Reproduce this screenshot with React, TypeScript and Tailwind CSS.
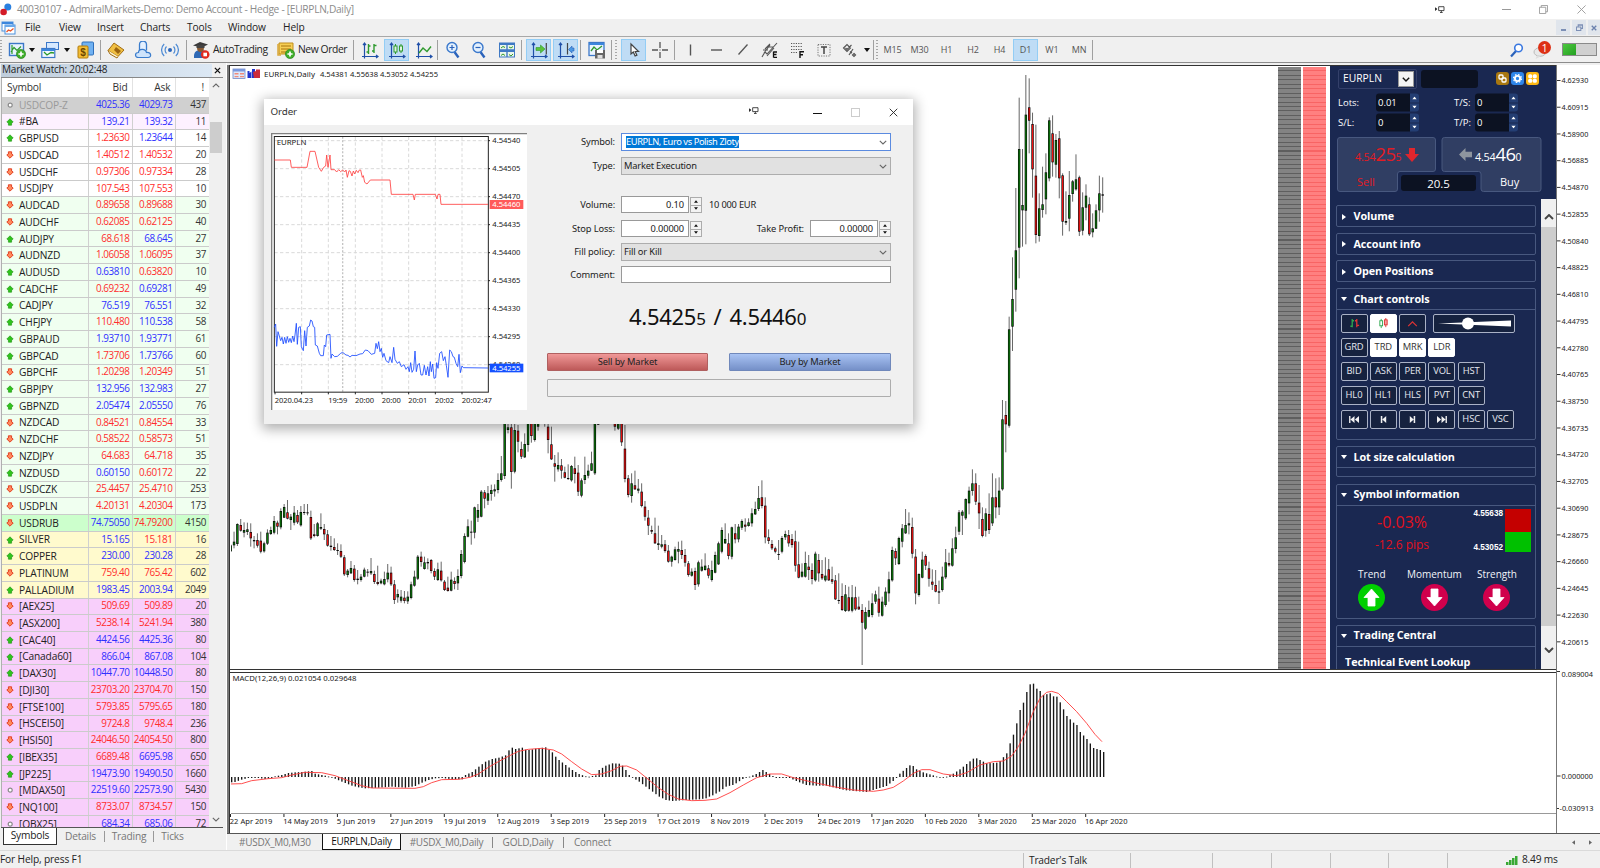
import React from "react";

/* ---------- data ---------- */

type Dir = "u" | "d" | "n";
type Row = [Dir, string, string, "r" | "b", string, "r" | "b", string, string];

const G = "bg-[#f0fff0]";
const P = "bg-[#f8cffb]";
const Y = "bg-[#fffacd]";
const W = "bg-white";

const rows: Row[] = [
  ["n", "USDCOP-Z", "4025.36", "b", "4029.73", "b", "437", "bg-[#d0d0d0]"],
  ["u", "#BA", "139.21", "b", "139.32", "b", "11", "bg-[#fdf1ff]"],
  ["u", "GBPUSD", "1.23630", "r", "1.23644", "b", "14", W],
  ["d", "USDCAD", "1.40512", "r", "1.40532", "r", "20", W],
  ["d", "USDCHF", "0.97306", "r", "0.97334", "r", "28", W],
  ["d", "USDJPY", "107.543", "r", "107.553", "r", "10", W],
  ["d", "AUDCAD", "0.89658", "r", "0.89688", "r", "30", G],
  ["d", "AUDCHF", "0.62085", "r", "0.62125", "r", "40", G],
  ["u", "AUDJPY", "68.618", "r", "68.645", "b", "27", G],
  ["d", "AUDNZD", "1.06058", "r", "1.06095", "r", "37", G],
  ["u", "AUDUSD", "0.63810", "b", "0.63820", "r", "10", G],
  ["u", "CADCHF", "0.69232", "r", "0.69281", "b", "49", G],
  ["u", "CADJPY", "76.519", "b", "76.551", "b", "32", G],
  ["u", "CHFJPY", "110.480", "r", "110.538", "b", "58", G],
  ["u", "GBPAUD", "1.93710", "b", "1.93771", "b", "61", G],
  ["u", "GBPCAD", "1.73706", "r", "1.73766", "b", "60", G],
  ["d", "GBPCHF", "1.20298", "r", "1.20349", "r", "51", G],
  ["u", "GBPJPY", "132.956", "b", "132.983", "b", "27", G],
  ["u", "GBPNZD", "2.05474", "b", "2.05550", "b", "76", G],
  ["d", "NZDCAD", "0.84521", "r", "0.84554", "r", "33", G],
  ["d", "NZDCHF", "0.58522", "r", "0.58573", "r", "51", G],
  ["d", "NZDJPY", "64.683", "r", "64.718", "r", "35", G],
  ["u", "NZDUSD", "0.60150", "b", "0.60172", "r", "22", G],
  ["d", "USDCZK", "25.4457", "r", "25.4710", "r", "253", G],
  ["d", "USDPLN", "4.20131", "r", "4.20304", "r", "173", G],
  ["d", "USDRUB", "74.75050", "b", "74.79200", "r", "4150", "bg-[#ccffcc]"],
  ["u", "SILVER", "15.165", "b", "15.181", "r", "16", Y],
  ["u", "COPPER", "230.00", "b", "230.28", "b", "28", Y],
  ["d", "PLATINUM", "759.40", "r", "765.42", "r", "602", Y],
  ["u", "PALLADIUM", "1983.45", "b", "2003.94", "b", "2049", Y],
  ["d", "[AEX25]", "509.69", "r", "509.89", "r", "20", P],
  ["d", "[ASX200]", "5238.14", "r", "5241.94", "r", "380", P],
  ["u", "[CAC40]", "4424.56", "b", "4425.36", "b", "80", P],
  ["u", "[Canada60]", "866.04", "b", "867.08", "b", "104", P],
  ["u", "[DAX30]", "10447.70", "b", "10448.50", "b", "80", P],
  ["d", "[DJI30]", "23703.20", "r", "23704.70", "r", "150", P],
  ["d", "[FTSE100]", "5793.85", "r", "5795.65", "r", "180", P],
  ["d", "[HSCEI50]", "9724.8", "r", "9748.4", "r", "236", P],
  ["d", "[HSI50]", "24046.50", "r", "24054.50", "r", "800", P],
  ["u", "[IBEX35]", "6689.48", "r", "6695.98", "b", "650", P],
  ["u", "[JP225]", "19473.90", "b", "19490.50", "b", "1660", P],
  ["n", "[MDAX50]", "22519.60", "b", "22573.90", "b", "5430", P],
  ["d", "[NQ100]", "8733.07", "r", "8734.57", "r", "150", P],
  ["n", "[OBX25]", "684.34", "b", "685.06", "b", "72", P],
];

/* high, body top, body bottom, low, direction; thirds of a pixel below y=400 */
const lower = `432,436,454,456,g 395,425,436,445,g 370,372,432,438,g 357,375,392,395,r 367,390,398,412,g 368,388,396,405,g 370,396,415,440,r 408,420,424,445,g
400,420,437,443,r 395,422,455,460,r 425,430,454,458,g 388,398,431,435,g 380,390,402,405,g 348,363,398,403,g 362,368,380,403,r 325,333,382,388,g
312,321,353,354,g 300,337,356,358,r 342,350,360,390,g 318,338,368,376,g 330,345,367,372,r 318,336,376,380,g 312,336,338,345,r 312,337,340,346,r
332,351,415,420,r 372,403,408,412,r 366,370,408,410,g 340,381,386,390,g 372,387,403,420,r 390,403,437,440,r 408,437,441,452,r 415,441,450,453,r
430,450,453,465,g 433,453,470,474,r 465,472,523,528,r 507,512,525,532,g 483,504,520,522,g 495,506,540,545,r 510,536,540,553,g 522,530,540,545,g
503,509,530,532,g 507,515,518,530,g 474,513,520,525,g 512,522,546,552,r 497,546,552,556,r 536,542,550,553,g 515,537,553,556,g 492,518,538,547,g
500,518,553,558,r 540,553,600,612,r 568,582,592,608,g 570,590,602,608,g 573,593,603,610,r 574,590,604,612,g 545,553,594,598,g 512,530,557,560,g
465,470,536,540,g 455,470,486,500,r 470,487,507,509,g 475,486,490,508,r 477,480,513,520,r 505,513,530,540,r 488,508,540,543,g 485,512,541,545,r
540,545,570,573,r 530,563,573,575,r 515,539,572,574,g 532,543,552,568,r 508,528,550,570,g 450,462,528,535,g 400,408,486,490,g 358,379,410,412,g
362,395,398,434,r 320,322,398,415,g 312,330,353,366,g 270,275,350,352,g 270,277,296,325,r 258,280,302,315,g 254,270,282,302,g 253,268,274,290,g
220,240,270,280,g 168,220,240,245,g -20,0,228,237,g 60,82,90,100,g 40,82,216,266,r 60,90,215,220,g 75,92,125,157,r 125,147,170,177,r
100,132,172,174,g 40,60,135,155,g 40,60,108,128,r 30,50,120,125,g 30,60,80,92,g 30,50,60,66,g 40,50,60,80,g 60,80,120,160,r
80,133,178,180,r 165,190,200,245,r 157,195,208,215,g 177,196,212,236,r 200,217,233,235,r 193,234,236,240,g 195,198,241,245,g 170,205,222,250,r
195,218,275,288,r 235,241,287,292,g 170,225,240,252,g 194,212,227,235,g 155,190,212,213,g 0,10,220,225,g 40,60,74,75,g 0,10,30,40,g
0,10,30,40,g 0,10,30,40,r 0,10,30,40,g 50,60,80,92,r 60,70,86,90,g 50,60,127,138,r 75,146,237,247,r 225,235,285,292,r
220,250,288,308,g 212,256,268,270,r 237,266,272,280,g 250,275,318,322,r 303,320,350,362,r 330,353,377,405,r 377,390,395,402,r 353,400,430,432,r
377,430,435,450,g 405,433,440,445,g 420,433,453,458,r 435,452,485,488,r 467,470,485,500,g 440,448,480,482,g 425,447,455,490,g 422,450,465,477,r
447,465,488,500,r 483,490,525,530,r 505,515,527,530,g 503,513,555,570,r 482,487,553,560,g 478,500,512,515,g 460,497,510,512,g 495,505,527,535,r
482,510,540,545,g 455,465,518,520,g 425,430,493,495,g 382,390,455,460,g 370,417,430,432,g 400,430,468,478,r 380,382,470,478,g 372,400,418,430,r
372,380,418,427,g 358,363,383,390,g 355,374,380,395,r 355,367,378,380,g 325,340,370,380,g 305,327,343,345,g 258,294,327,333,g 241,292,318,325,r
292,317,412,430,r 388,412,423,432,r 420,432,445,450,r 440,445,455,460,r 420,462,464,480,g 408,414,455,460,g 392,402,412,420,g 390,405,430,440,r
402,417,435,443,r 392,424,497,515,r 425,493,533,535,r 490,515,530,533,g 455,489,530,533,g 465,500,510,540,r 490,510,537,553,r 455,461,541,545,g
462,480,520,545,r 480,522,535,540,r 472,527,541,545,g 477,508,541,543,r 500,538,545,552,r 525,541,598,600,r 520,600,603,612,g 550,588,630,633,r
555,583,633,636,g 560,592,632,635,r 555,592,632,637,g 560,592,628,632,r 590,620,628,630,r 612,630,668,795,r 622,636,686,690,g 602,630,650,652,g
580,610,645,652,g 572,583,605,612,g 560,596,638,650,r 590,605,647,650,g 562,575,615,620,g 515,538,580,605,g 440,450,541,545,g 445,453,475,495,r
410,414,492,495,g 372,385,425,442,g 327,375,400,402,g 337,370,376,403,g 353,381,461,475,r 447,470,580,613,r 520,522,585,590,g 455,479,533,535,g
463,468,497,510,r 485,505,536,560,r 508,545,554,570,r 510,555,575,577,r 542,574,578,612,g 500,530,570,575,g 447,487,532,537,g 458,489,496,500,r
415,445,497,500,g 380,412,447,460,g 330,337,395,405,g 330,335,347,405,g 295,297,355,360,g 260,272,310,343,g 208,250,273,287,g 220,250,305,315,r
255,308,340,387,r 322,357,408,412,r 325,340,392,410,g 280,342,390,402,r 220,292,370,378,g 235,292,322,355,r 232,272,322,345,g 0,58,268,272,g
3,45,73,157,r`;

/* the rally, in thirds of a pixel below y=60 */
const upper = `770,808,1097,1103,g 592,717,800,873,g 384,571,689,755,g 113,267,563,655,g 267,435,451,560,g 45,164,452,553,g 55,142,182,280,r 158,192,328,413,r
194,347,525,550,r 400,445,528,545,g 320,433,450,473,g 280,337,418,463,g 172,181,355,364,g 166,220,307,350,r 222,240,314,353,g 213,235,355,415,r
340,346,485,527,r 394,483,488,495,g 333,405,476,514,g 360,364,402,425,g 283,358,388,392,g 347,352,515,528,r 397,442,512,526,g 373,407,443,481,g
412,433,523,528,r 460,505,517,532,g 433,451,506,507,g 347,400,451,485,g 352,403,407,458,r`;

type Candle = { h: number; t: number; b: number; l: number; up: boolean };
const parse = (s: string, base: number): Candle[] =>
  s.trim().split(/\s+/).map((c) => {
    const p = c.split(",");
    const y = (k: number) => base + Number(p[k]) / 3;
    return { h: y(0), t: y(1), b: y(2), l: y(3), up: p[4] === "g" };
  });
const candles = [...parse(lower, 400), ...parse(upper, 60)];
const bx = (i: number) => 230.7 + i * 3.341;

const macdKeys: [number, number][] = [
  [0, 1147], [1, 1146], [3, 1139], [5, 1134], [8, 1134], [10, 1137], [12, 1134], [13, 1129], [15, 1125], [17, 1119], [19, 1117], [21, 1116], [24, 1113], [25, 1121],
  [28, 1127], [30, 1132], [33, 1145], [36, 1157], [38, 1162], [40, 1165], [44, 1163], [48, 1160], [52, 1163], [54, 1160], [55, 1158], [57, 1148], [59, 1140], [61, 1135],
  [63, 1134], [66, 1138], [69, 1138], [70, 1125], [72, 1116], [74, 1100], [76, 1085], [78, 1077], [80, 1073], [82, 1066], [83, 1051], [84, 1043], [85, 1047], [87, 1043],
  [88, 1049], [89, 1050], [91, 1046], [94, 1042], [95, 1050], [96, 1057], [97, 1070], [98, 1080], [100, 1095], [102, 1110], [104, 1122], [106, 1129], [107, 1130],
  [109, 1126], [110, 1110], [112, 1097], [114, 1090], [116, 1091], [117, 1097], [118, 1110], [119, 1125], [120, 1133], [122, 1145], [124, 1160], [126, 1175], [128, 1190],
  [130, 1200], [132, 1203], [136, 1200], [140, 1198], [142, 1195], [143, 1190], [144, 1186], [146, 1175], [148, 1160], [150, 1155], [151, 1150], [153, 1137], [155, 1130],
  [157, 1122], [159, 1110], [160, 1116], [162, 1128], [163, 1134], [167, 1134], [169, 1143], [172, 1155], [175, 1157], [178, 1157], [182, 1167], [184, 1171], [190, 1176],
  [193, 1167], [196, 1158], [198, 1143], [199, 1134], [200, 1121], [202, 1104], [203, 1096], [204, 1098], [205, 1108], [207, 1117], [210, 1126], [212, 1133], [214, 1130],
  [216, 1121], [218, 1108], [220, 1092], [222, 1076], [223, 1075], [224, 1080], [226, 1090], [229, 1088], [230, 1083], [232, 1060], [233, 1030], [234, 1004], [235, 970],
  [236, 930], [237, 908], [238, 876], [239, 853], [240, 851], [241, 866], [242, 873], [243, 885], [245, 880], [246, 889], [247, 890], [248, 907], [249, 928], [250, 948],
  [252, 968], [253, 975], [254, 996], [256, 1017], [258, 1044], [260, 1050], [261, 1056],
];
const macd: number[] = [];
for (let k = 0; k < macdKeys.length - 1; k++) {
  const [i0, y0] = macdKeys[k];
  const [i1, y1] = macdKeys[k + 1];
  for (let i = i0; i < i1; i++) macd.push(400 + (y0 + ((y1 - y0) * (i - i0)) / (i1 - i0)) / 3);
}

const signal =
  "16,1152 50,1151 80,1142 130,1136 170,1133 200,1125 240,1117 290,1118 330,1127 370,1142 410,1157 440,1164 570,1165 595,1160 620,1148 650,1139 700,1138 735,1132 760,1122 790,1102 820,1085 850,1069 880,1054 910,1048 950,1045 985,1050 1010,1062 1040,1085 1070,1107 1100,1124 1130,1122 1160,1112 1185,1099 1205,1098 1235,1110 1260,1130 1300,1163 1330,1183 1360,1197 1400,1202 1440,1201 1475,1197 1515,1178 1555,1155 1595,1133 1635,1122 1670,1122 1705,1133 1765,1147 1825,1160 1885,1170 1945,1174 1975,1170 2005,1162 2035,1143 2065,1120 2090,1109 2115,1109 2155,1122 2195,1127 2225,1118 2265,1095 2305,1085 2335,1083 2360,1068 2380,1040 2400,1000 2425,935 2445,895 2465,877 2480,874 2500,880 2525,905 2555,935 2585,970 2610,1003 2631,1025";

const dates = ["22 Apr 2019", "14 May 2019", "5 Jun 2019", "27 Jun 2019", "19 Jul 2019", "12 Aug 2019", "3 Sep 2019", "25 Sep 2019", "17 Oct 2019", "8 Nov 2019", "2 Dec 2019", "24 Dec 2019", "17 Jan 2020", "10 Feb 2020", "3 Mar 2020", "25 Mar 2020", "16 Apr 2020"];
const axis = Array.from({ length: 22 }, (_, i) => (4.6293 - i * 0.02015).toFixed(5));

/* ---------- small pieces ---------- */

const Mark = ({ d }: { d: Dir }) => (
  <svg viewBox="0 0 8 8" className="h-[8px] w-[8px]">
    {d === "n" && <circle cx="4.2" cy="4.2" r="2" fill="#fff" stroke="#8a8a8a" strokeWidth="1.2" />}
    {d === "u" && <path d="M4 .8 7.2 4 5.6 5V7.2H2.4V5L.8 4Z" fill="#2fc41c" stroke="#1d8f10" strokeWidth=".6" />}
    {d === "d" && <path d="M4 7.2 7.2 4 5.6 3V.8H2.4V3L.8 4Z" fill="#ff8a5c" stroke="#e0371a" strokeWidth=".9" />}
  </svg>
);

const Sep = () => <div className="h-[20px] w-px shrink-0 bg-[#a0a0a0]" />;
const Grip = () => <div className="h-[20px] w-[2px] shrink-0 bg-[repeating-linear-gradient(#a8a8a8_0_1px,#f0f0f0_1px_3px)]" />;
const Caret = () => (
  <svg viewBox="0 0 6 4" className="h-[4px] w-[6px] shrink-0"><path d="M0 0h6L3 4Z" fill="#111" /></svg>
);

const Ico = ({ className = "w-[26px]", children }: { className?: string; children: React.ReactNode }) => (
  <div className={"flex h-[22px] shrink-0 items-center justify-center " + className}>
    <svg viewBox="0 0 18 18" className="h-[18px] w-[18px]" fill="none">{children}</svg>
  </div>
);
const hl = "bg-[#bfdcf5] outline outline-1 -outline-offset-1 outline-[#93cdf5]";
const Plus = () => (
  <g><circle cx="13" cy="13" r="4.6" fill="#3fae2a" stroke="#23801a" strokeWidth=".6" /><path d="M13 10.4v5.2M10.4 13h5.2" stroke="#fff" strokeWidth="1.7" /></g>
);
const Axes = () => <path d="M3.5 2v13.5H17M2 4.2 3.5 2 5 4.2M15 14l2 1.5-2 1.5M1 15.5h2.5v2" stroke="#1f4fa8" strokeWidth="1.2" />;

const DockIcon = ({ className }: { className?: string }) => (
  <svg viewBox="0 0 11 9" className={"h-[8px] w-[10px] " + (className ?? "")} fill="none">
    <path d="M0 1.5v4l2.5-2Z" fill="#111" /><path d="M4 .8h6v4.4H4ZM7 5.2V7M5.5 7.3h3" stroke="#333" strokeWidth="1" />
  </svg>
);

const Chev = ({ className }: { className?: string }) => (
  <svg viewBox="0 0 8 5" className={"h-[5px] w-[8px] " + (className ?? "")} fill="none"><path d="M.8.8 4 4 7.2.8" stroke="#666" strokeWidth="1.1" /></svg>
);

/* ---------- toolbar ---------- */

const Toolbar = () => (
  <div className="flex h-[26px] shrink-0 items-center border-b border-[#8c8c8c] bg-[#f0f0f0] text-[10.3px] tracking-[-0.4px] text-[#222]">
    <Grip />
    <Ico className="ml-[2px] w-[25px]"><rect x="1.5" y="2.5" width="14" height="12" fill="#e8f3ff" stroke="#3c78c8" strokeWidth="1.4" /><path d="M3 11 6 6.5l3 3 4-4M4 4v9" stroke="#2b9a2b" strokeWidth="1.2" /><Plus /></Ico>
    <Caret />
    <Ico className="ml-[1px] w-[28px]"><rect x="5.5" y="1.5" width="12" height="7" fill="#d6e9ff" stroke="#3c78c8" /><rect x=".8" y="7.5" width="13" height="9" fill="#f2f8ff" stroke="#3c78c8" strokeWidth="1.2" /><path d="M1 8h13v2H1z" fill="#3c86dd" /><path d="m3 11 3 3 4-2.5L13 12" stroke="#2b9a2b" strokeWidth="1.3" /></Ico>
    <Caret />
    <Ico className="ml-px w-[29px]"><rect x="5" y="1" width="11.5" height="13" rx="1" fill="#6fb1f2" stroke="#2f70bb" /><rect x="1" y="5" width="10" height="12" rx="1" fill="#f3bd35" stroke="#b27c0f" /><text x="3.2" y="15" fontSize="10" fontWeight="bold" fill="#6b4600" fontFamily="Liberation Sans, sans-serif">$</text></Ico>
    <Sep />
    <Ico className="ml-px w-[28px]"><path d="M1 9.5 7 2l10 7-6 6.5Z" fill="#f0bf42" stroke="#a26d14" /><path d="M1 9.5 3 13l7 4 1-1.5" fill="#fff4cf" stroke="#a26d14" /><path d="m9 6 5 4-3 3-4-4z" fill="#9c6510" /></Ico>
    <Ico className="w-[25px]"><path d="M5.500 9.500V3.500a3.500 3.500 0 0 1 7 0v6" fill="#e5f1ff" stroke="#3a7ccc" strokeWidth="1.300" /><path d="M4.500 16.500c-4 0-4-5 0-5 0-4 7-4.500 8 0 5-.5 5.500 5 1.500 5Z" fill="#cfe4fb" stroke="#3a7ccc" strokeWidth="1.200" /></Ico>
    <Ico className="w-[29px]"><circle cx="9" cy="9" r="2" fill="#2b66bb" /><path d="M5.500 12.500a5 5 0 0 1 0-7M12.500 5.500a5 5 0 0 1 0 7M3.200 15a8.200 8.200 0 0 1 0-12M14.800 3a8.200 8.200 0 0 1 0 12" stroke="#4c8ad4" strokeWidth="1.2" /></Ico>
    <div className="ml-[2px]"><Sep /></div>
    <Ico className="ml-[2px] w-[24px]"><path d="M2 15c0-4 2.500-6 7-6s6 2 6 6v2H2Z" fill="#2f69b5" /><circle cx="8.500" cy="7.500" r="3.400" fill="#8a5b33" /><path d="m1 4.500 7-3.500 8 2.500-6 3Z" fill="#3a3a3a" /><path d="M4.500 4h8v3h-8z" fill="#444" /><circle cx="13.200" cy="13.500" r="4.300" fill="#e22a1d" /><rect x="11.400" y="11.700" width="3.600" height="3.600" fill="#fff" /></Ico>
    <div className="w-[61px] shrink-0">AutoTrading</div>
    <Ico className="w-[24px]"><path d="M2 2h14v11H2z" fill="#f6cf55" stroke="#c08d1b" /><path d="M4 5h10M4 8h10M4 11h6" stroke="#a8740e" /><path d="M1 3v11h3" stroke="#d9a637" strokeWidth="1.500" /><Plus /></Ico>
    <div className="w-[55px] shrink-0 whitespace-nowrap">New Order</div>
    <Sep />
    <Ico className="ml-[2px] w-[28px]"><Axes /><path d="M7.500 3v10M5.500 11h2M7.500 5h2M13 3v9M11 10h2M13 4.500h2.500" stroke="#2f9a2f" strokeWidth="1.400" /></Ico>
    <Ico className={"w-[25px] " + hl}><Axes /><path d="M7.500 3v10M13 3v9" stroke="#2f9a2f" /><rect x="6" y="5" width="3" height="6" fill="#dff5df" stroke="#2f9a2f" /><rect x="11.500" y="5" width="3" height="5" fill="#dff5df" stroke="#2f9a2f" /></Ico>
    <Ico className="ml-[1px] w-[27px]"><Axes /><path d="m4 12 4-5 4 3.500 4-5" stroke="#2f9a2f" strokeWidth="1.400" /></Ico>
    <Sep />
    <Ico className="ml-[2px] w-[26px]"><path d="m10.500 11 4 5.500" stroke="#2a62ba" strokeWidth="2.400" /><circle cx="8" cy="6.500" r="5" fill="#e3f0fd" stroke="#3a78cc" strokeWidth="1.400" /><path d="M5.500 6.500h5M8 4v5" stroke="#2a62ba" strokeWidth="1.200" /></Ico>
    <Ico className="w-[26px]"><path d="m10.500 11 4 5.500" stroke="#2a62ba" strokeWidth="2.400" /><circle cx="8" cy="6.500" r="5" fill="#e3f0fd" stroke="#3a78cc" strokeWidth="1.400" /><path d="M5.500 6.500h5" stroke="#2a62ba" strokeWidth="1.200" /></Ico>
    <Ico className="w-[29px]"><rect x="1" y="1.500" width="16" height="15" fill="#3f79c4" /><path d="M2 4h6.300v4.300H2zM9.700 4H16v4.300H9.700zM2 11h6.300v4.600H2zM9.700 11H16v4.600H9.700z" fill="#eaf6ea" /><path d="m3 7 2-1.500 2 1M11 6l2 1 2-1.500M3 14.500 5 13l2 1.500M11 13.500l2 1.500 2-2" stroke="#2f9a2f" /></Ico>
    <Sep />
    <Ico className={"ml-[4px] w-[25px] " + hl}><Axes /><path d="M16.300 2v11.500" stroke="#444" strokeWidth="1.200" /><path d="M6 6.500h4.500V4l4.500 4-4.500 4V9.500H6Z" fill="#5cc43a" stroke="#2f9a2f" strokeWidth=".6" /></Ico>
    <Ico className={"ml-[2px] w-[25px] " + hl}><Axes /><path d="M10.500 2v11.500" stroke="#444" strokeWidth="1.200" /><path d="M17 7h-2V5l-3.500 3.500L15 12v-2h2Z" fill="#4b97e2" stroke="#2a62ba" strokeWidth=".6" /></Ico>
    <div className="ml-[2px]"><Sep /></div>
    <Ico className="ml-[2px] w-[28px]"><rect x="1" y="1.500" width="15" height="13" fill="#eaf4ff" stroke="#3c78c8" strokeWidth="1.300" /><path d="M1 2h15v2H1z" fill="#3c86dd" /><path d="m3 10 3-4 3 3 5-4" stroke="#2f9a2f" strokeWidth="1.300" /><rect x="7" y="9" width="10" height="8.500" fill="#666" /><path d="M9 9h6v3H9z" fill="#fff" /><path d="M9.500 14h5v3.500h-5z" fill="#ddd" /></Ico>
    <Sep />
    <div className="ml-[3px]"><Grip /></div>
    <Ico className={"ml-[4px] w-[25px] " + hl}><path d="M6 3v10l2.300-2 1.800 4 1.800-.8-1.700-3.700h3.300Z" fill="#fff" stroke="#444" strokeWidth="1.200" /></Ico>
    <Ico className="w-[27px]"><path d="M9 1v6M9 11v6M1 9h6M11 9h6" stroke="#555" strokeWidth="1.300" /><path d="M8.500 8.500h1v1h-1z" fill="#555" /></Ico>
    <div className="ml-px"><Sep /></div>
    <Ico className="ml-[2px] w-[26px]"><path d="M9.500 3.500v11" stroke="#555" strokeWidth="1.400" /></Ico>
    <Ico className="w-[26px]"><path d="M4 9h11" stroke="#555" strokeWidth="1.400" /></Ico>
    <Ico className="w-[27px]"><path d="m4.500 13.500 9-10" stroke="#555" strokeWidth="1.300" /></Ico>
    <Ico className="w-[27px]"><path d="m1 16 3-5 2 2 10-11M4 8l5-5M3 12l6-8M6 15l7-8M2 9h5M7 6h5" stroke="#555" strokeWidth="1.100" /><path d="M12.500 10.500v6M12.500 11H16M12.500 13.500h3M12.500 16.300H16" stroke="#111" strokeWidth="1.300" /></Ico>
    <Ico className="w-[27px]"><path d="M3 2.500h11M3 5.500h11M3 8.500h11M3 11.500h7" stroke="#555" strokeWidth="1.200" strokeDasharray="1.200 1.200" /><path d="M12 17v-6.200h4M12 13.800h3" stroke="#111" strokeWidth="1.400" /></Ico>
    <Ico className="w-[27px]"><rect x="3" y="3.500" width="12" height="11.500" stroke="#777" strokeDasharray="1.200 1.200" /><path d="M6 6h6M9 6v7" stroke="#444" strokeWidth="1.500" /></Ico>
    <Ico className="w-[25px]"><path d="m2.500 7 3.500-3.500L9.500 7 6 10.500ZM4.500 7 6 8.500 10.500 4" stroke="#555" strokeWidth="1.100" /><path d="m8 14 4-6M9 10.500l2 1.500M13 12.500l1.500 1.500-1.500 1.500-1.500-1.500z" stroke="#555" strokeWidth="1.200" /></Ico>
    <div className="ml-[2px]"><Caret /></div>
    <div className="ml-[3px]"><Sep /></div>
    <div className="ml-[2px]"><Grip /></div>
    <div className="ml-px flex items-center text-center text-[9px] tracking-[-0.1px] text-[#555]">
      <div className="w-[27px]">M15</div><div className="w-[27px]">M30</div><div className="w-[27px]">H1</div><div className="w-[26px]">H2</div><div className="w-[27px]">H4</div>
      <div className={"h-[22px] w-[25px] leading-[22px] " + hl}>D1</div><div className="w-[28px]">W1</div><div className="w-[26px]">MN</div>
    </div>
    <Sep />
    <div className="ml-auto flex items-center pr-[3px]">
      <Ico className="w-[24px]"><path d="m8 10-5 5.500" stroke="#2a62ba" strokeWidth="2.200" /><circle cx="10.500" cy="7" r="3.800" fill="#fff" stroke="#3a78e0" strokeWidth="1.600" /></Ico>
      <div className="relative ml-[3px] h-[20px] w-[22px]">
        <svg viewBox="0 0 22 20" className="h-[20px] w-[22px]" fill="none"><ellipse cx="8" cy="12" rx="6" ry="4.300" fill="#e8e8e8" stroke="#bbb" /><path d="m5 15.500-1.500 3.500 5-2.500" fill="#ddd" /></svg>
        <span className="absolute left-[6px] top-px h-[13px] w-[13px] rounded-full bg-[#dd3015] text-center text-[11px] leading-[13px] text-white">1</span>
      </div>
      <div className="ml-[8px] flex h-[13px] w-[35px] border border-[#8a8a8a] bg-[#d0d0d0]"><div className="w-[13px] bg-gradient-to-br from-[#4cc83e] to-[#22a022]" /></div>
    </div>
  </div>
);

/* ---------- market watch ---------- */

const cell = "flex h-full items-center justify-end border-r border-[#d0d0d0] pr-[2px] text-[9.900px] tracking-[-0.420px]";
const MarketWatch = () => (
  <div className="flex w-[226px] shrink-0 flex-col bg-[#f0f0f0]">
    <div className="ml-px mt-px flex h-[13px] w-[222px] shrink-0 items-center justify-between bg-[#f0f0f0]">
      <div className="h-full flex-1 bg-gradient-to-r from-[#bfcddb] to-[#dce8f4] pl-px text-[10px] leading-[11px] tracking-[-0.2px] text-[#222]">Market Watch: 20:02:48</div>
      <svg viewBox="0 0 8 8" className="mx-[2px] h-[7px] w-[7px]"><path d="m1 1 6 6M7 1 1 7" stroke="#111" strokeWidth="1.500" /></svg>
    </div>
    <div className="ml-px flex h-[751px] w-[222px] shrink-0 overflow-hidden border-y border-b-[#555] border-t-[#888] bg-white">
      <div className="w-[208px] shrink-0 border-l border-[#b0b0b0] text-[10.200px] tracking-[-0.15px]">
        <div className="grid h-[19px] grid-cols-[87px_43.500px_43px_33.500px] text-[#333]">
          <div className="flex items-center border-r border-[#e2e2e2] pl-[5px]">Symbol</div>
          <div className="flex items-center justify-end border-r border-[#e2e2e2] pr-[4px]">Bid</div>
          <div className="flex items-center justify-end border-r border-[#e2e2e2] pr-[4px]">Ask</div>
          <div className="flex items-center justify-end pr-[5px]">!</div>
        </div>
        {rows.map(([d, s, b, bc, a, ac, sp, bg]) => (
          <div key={s} className={"grid h-[16.720px] grid-cols-[87px_43.500px_43px_33.500px] border-b border-[#cbcbcb] leading-none " + bg}>
            <div className={"flex h-full items-center border-r border-[#d0d0d0] pl-[4px] " + (s === "USDCOP-Z" ? "text-[#9a9a9a]" : "text-[#222]")}>
              <Mark d={d} /><span className="ml-[5px]">{s}</span>
            </div>
            <div className={cell + (bc === "r" ? " text-[#ff2d2d]" : " text-[#3030ff]")}>{b}</div>
            <div className={cell + (ac === "r" ? " text-[#ff2d2d]" : " text-[#3030ff]")}>{a}</div>
            <div className="flex h-full items-center justify-end pr-[3px] text-[9.900px] tracking-[-0.420px] text-[#333]">{sp}</div>
          </div>
        ))}
      </div>
      <div className="flex flex-1 flex-col items-center justify-between bg-[#f0f0f0] py-[5px]">
        <div className="flex w-full flex-col items-center"><Chev className="rotate-180" /><div className="mr-px mt-[34px] h-[31px] w-[12px] bg-[#cdcdcd]" /></div>
        <Chev />
      </div>
    </div>
    <div className="ml-[3px] flex h-[20px] items-start text-[10.200px] tracking-[-0.2px] text-[#777]">
      <div className="h-[17px] w-[54px] border border-t-0 border-[#333] bg-white text-center leading-[15px] text-[#222]">Symbols</div>
      <div className="w-[47px] text-center leading-[16px]">Details</div>
      <div className="mt-[3px] h-[11px] w-px bg-[#999]" />
      <div className="w-[48px] text-center leading-[16px]">Trading</div>
      <div className="mt-[3px] h-[11px] w-px bg-[#999]" />
      <div className="w-[37px] text-center leading-[16px]">Ticks</div>
    </div>
  </div>
);

/* ---------- charts ---------- */

const chartText = { fontFamily: "Noto Sans, sans-serif", fontSize: 7.4, fill: "#222" };

const PriceChart = () => (
  <svg viewBox="231 66 1047 603" className="h-full w-[1047px] shrink-0">
    <rect x="233" y="69" width="12" height="9.500" fill="#dce8fb" stroke="#7088c8" strokeWidth=".8" />
    <path d="M233 69h12v2.500h-12z" fill="#7a97dd" /><path d="M234.500 73h4v1.500h-4zm0 3h4v1.300h-4zm5.500-3h4v1.500h-4zm0 3h4v1.300h-4z" fill="#f08a7a" />
    <path d="M247.500 71h2v2l2-1.500V78h-4zM252 69h3v9h-3z" fill="#2233cc" /><path d="M253 72l3-1v-1.500h4V78h-6z" fill="#cc2a3a" />
    <text x="264" y="76.700" textLength="51" lengthAdjust="spacingAndGlyphs" {...chartText}>EURPLN,Daily</text>
    <text x="320" y="76.700" textLength="118" lengthAdjust="spacingAndGlyphs" {...chartText}>4.54381 4.55638 4.53052 4.54255</text>
    {candles.map((c, i) => {
      const h = Math.max(c.b - c.t, 1);
      return (
        <g key={i}>
          <path d={`M${bx(i)} ${c.h}V${c.l}`} stroke="#333" strokeWidth=".75" />
          <rect x={bx(i) - 1.200} y={c.t} width="2.400" height={h} fill="#0a0a0a" />
          {h > 1.600 && <rect x={bx(i) - 0.600} y={c.t + 0.700} width="1.200" height={h - 1.400} fill={c.up ? "#0a7a0a" : "#f01010"} />}
        </g>
      );
    })}
  </svg>
);

const MacdChart = () => (
  <svg viewBox="231 673 1325 140" className="h-[140px] w-[1325px] shrink-0">
    <text x="232.500" y="681" textLength="124" lengthAdjust="spacingAndGlyphs" {...chartText}>MACD(12,26,9) 0.021054 0.029648</text>
    {[...macd, 752].map((y, i) => (
      <rect key={i} x={bx(i) + 0.300} y={Math.min(y, 777)} width="1.350" height={Math.max(Math.abs(y - 777), 0.800)} fill="#161616" />
    ))}
    <polyline points={signal} transform="translate(225 400) scale(.33333)" fill="none" stroke="#ff3b3b" strokeWidth="2.700" />
  </svg>
);

const DateAxis = () => (
  <svg viewBox="229 813 1327 17" className="-ml-[2px] h-[17px] w-[1327px] shrink-0">
    {dates.map((d, i) => (
      <g key={d}>
        <path d={`M${230.500 + i * 53.450} 812v4`} stroke="#222" />
        <text x={229.800 + i * 53.450} y="823" textLength={d.length > 10 ? (d.includes("M") ? 44.500 : 42.500) : 38.500} lengthAdjust="spacingAndGlyphs" {...chartText}>{d}</text>
      </g>
    ))}
  </svg>
);

const PriceAxis = () => (
  <svg viewBox="1557 66 43 765" className="h-[765px] w-[43px] shrink-0 bg-white">
    {axis.map((a, i) => (
      <g key={a}>
        <path d={`M1557 ${81.500 + i * 26.730}h3.500`} stroke="#333" />
        <text x="1561.500" y={84.200 + i * 26.730} textLength="26.800" lengthAdjust="spacingAndGlyphs" {...chartText}>{a}</text>
      </g>
    ))}
    <text x="1561.500" y="678.400" textLength="31.500" lengthAdjust="spacingAndGlyphs" {...chartText}>0.089004</text>
    <text x="1561.500" y="779.700" textLength="31.500" lengthAdjust="spacingAndGlyphs" {...chartText}>0.000000</text>
    <text x="1559.500" y="812" textLength="34" lengthAdjust="spacingAndGlyphs" {...chartText}>-0.030913</text>
    <path d="M1557 672.500h3M1557 777h3.500M1557 809.500h2" stroke="#333" />
  </svg>
);

/* ---------- trading panel ---------- */

const Spin = ({ v }: { v: string }) => (
  <div className="flex h-[18px] w-[43px]">
    <div className="flex w-[34px] items-center rounded-l-[3px] bg-[#0c1222] pl-[2px]">{v}</div>
    <div className="flex w-[9px] flex-col gap-px">
      <div className="flex flex-1 items-center justify-center rounded-tr-[3px] bg-[#243e73]"><svg viewBox="0 0 6 4" className="h-[3px] w-[5px]"><path d="M0 4h6L3 0Z" fill="#fff" /></svg></div>
      <div className="flex flex-1 items-center justify-center rounded-br-[3px] bg-[#243e73]"><svg viewBox="0 0 6 4" className="h-[3px] w-[5px]"><path d="M0 0h6L3 4Z" fill="#fff" /></svg></div>
    </div>
  </div>
);

const Head = ({ open, children }: { open?: boolean; children: string }) => (
  <div className={"flex h-[21px] shrink-0 items-center text-[10.800px] font-bold tracking-[-0.080px] text-white " + (open ? "border-b border-[#48587f]" : "")}>
    <svg viewBox="0 0 6 6" className="ml-[4px] h-[6px] w-[6px]">{open ? <path d="M0 1h6L3 5Z" fill="#fff" /> : <path d="M1 0v6l4-3Z" fill="#fff" />}</svg>
    <span className="ml-[6.500px]">{children}</span>
  </div>
);
const box = "flex shrink-0 flex-col rounded-[2px] border border-[#48587f]";

const Btn = ({ on, children }: { on?: boolean; children: React.ReactNode }) => (
  <div className={"flex h-[19px] w-[27px] shrink-0 items-center justify-center rounded-[2px] border text-[9.400px] font-medium tracking-[-0.1px] " + (on ? "border-white bg-white text-[#333]" : "border-[#aab2c6] bg-[#16223f] text-[#e6e9f2]")}>
    {children}
  </div>
);
const Nav = ({ d }: { d: string }) => <svg viewBox="0 0 12 10" className="h-[9px] w-[11px]"><path d={d} fill="#f2f2f2" /></svg>;

const Gauge = ({ label, up }: { label: string; up?: boolean }) => (
  <div className="flex w-[62.600px] flex-col items-center">
    <div className="whitespace-nowrap text-[10px] leading-[14px] text-[#f2f4f9]">{label}</div>
    <svg viewBox="0 0 27 27" className="mt-[3px] h-[27px] w-[27px]">
      <circle cx="13.500" cy="13.500" r="13.500" fill={up ? "#00d000" : "#d0004c"} />
      <path d="M13.500 5 21 13.500h-4V22h-7v-8.500H6Z" fill="#fff" stroke="#fff" strokeWidth=".8" strokeLinejoin="round" transform={up ? "" : "rotate(180 13.500 13.500)"} />
    </svg>
  </div>
);

const Panel = () => (
  <div className="mr-px flex h-full w-[226px] shrink-0 flex-col overflow-hidden bg-[#1a2851] font-['Open_Sans',sans-serif] text-[9.500px] text-white">
    <div className="ml-[8px] mt-[3px] flex h-[21px] shrink-0 items-start">
      <div className="flex h-[20px] w-[79px] items-center justify-between rounded-[2px] border border-[#34406a] pl-[4px] pr-[2px] text-[10.300px] font-medium">
        EURPLN
        <div className="flex h-[16px] w-[16px] items-center justify-center border border-[#999] bg-[#f4f4f4]"><svg viewBox="0 0 8 5" className="h-[5px] w-[8px]" fill="none"><path d="M.8.8 4 4 7.200.8" stroke="#111" strokeWidth="1.400" /></svg></div>
      </div>
      <div className="ml-[4px] mt-px h-[18px] w-[57px] rounded-[3px] bg-[#0c1222]" />
      <div className="ml-[18px] mt-[3px] flex gap-[2px]">
        <div className="h-[13px] w-[13px] rounded-[3px] bg-[#a87710]"><svg viewBox="0 0 13 13" fill="none"><rect x="3" y="3" width="4" height="4" rx="1" stroke="#fff" strokeWidth="1.300" /><rect x="6" y="6" width="4" height="4" rx="1" stroke="#fff" strokeWidth="1.300" /></svg></div>
        <div className="h-[13px] w-[13px] rounded-[3px] bg-[#2f86ea]"><svg viewBox="0 0 13 13" fill="none"><circle cx="6.500" cy="6.500" r="2.600" stroke="#fff" strokeWidth="1.900" /><circle cx="6.500" cy="6.500" r="4" stroke="#fff" strokeWidth="1.200" strokeDasharray="1.600 1.540" /></svg></div>
        <div className="h-[13px] w-[13px] rounded-[3px] bg-[#fdb813]"><svg viewBox="0 0 13 13" fill="#fff"><rect x="2.200" y="2.200" width="4" height="4" rx="1.500" /><rect x="6.800" y="2.200" width="4" height="4" rx="1.500" /><rect x="2.200" y="6.800" width="4" height="4" rx="1.500" /><rect x="6.800" y="6.800" width="4" height="4" rx="1.500" /></svg></div>
      </div>
    </div>
    {[["Lots:", "0.01", "T/S:", "0"], ["S/L:", "0", "T/P:", "0"]].map((r) => (
      <div key={r[0]} className="ml-[8px] mt-[4px] flex h-[16px] shrink-0 translate-y-[0.500px] items-center font-medium">
        <div className="w-[38px]">{r[0]}</div><Spin v={r[1]} /><div className="ml-[35px] w-[21px]">{r[2]}</div><Spin v={r[3]} />
      </div>
    ))}
    <div className="relative ml-[7px] mt-[7px] h-[55px] w-[205px] shrink-0">
      <svg viewBox="0 0 205 55" className="absolute inset-0 h-full w-full" fill="#303e63" stroke="#48587f">
        <path d="M3 .5h93a2.500 2.500 0 0 1 2.500 2.500v29a2.500 2.500 0 0 1-2.500 2.500H63a2.500 2.500 0 0 0-2.500 2.500v15a2.500 2.500 0 0 1-2.500 2.500H3A2.500 2.500 0 0 1 .5 52V3A2.500 2.500 0 0 1 3 .5Z" />
        <path d="M107.500.5h94a2.500 2.500 0 0 1 2.500 2.500v49a2.500 2.500 0 0 1-2.500 2.500h-55a2.500 2.500 0 0 1-2.500-2.500V37a2.500 2.500 0 0 0-2.500-2.500h-34A2.500 2.500 0 0 1 105 32V3a2.500 2.500 0 0 1 2.500-2.500Z" />
      </svg>
      <div className="relative -top-px flex h-[35px] items-center">
        <div className="flex w-[99px] items-baseline pl-[18px] text-[#e31b23]">
          <span className="text-[10.800px] tracking-[-0.2px]">4.54</span><span className="text-[18.500px] leading-[24px] tracking-[-0.6px]">25</span><span className="text-[10.500px]">5</span>
          <svg viewBox="0 0 14 14" className="ml-[3px] h-[14px] w-[14px] translate-y-px self-center"><path d="M4 0h6v6h4l-7 8-7-8h4Z" fill="#e0262d" /></svg>
        </div>
        <div className="ml-[6px] flex items-baseline pl-[17px]">
          <svg viewBox="0 0 14 14" className="mr-[3px] h-[13px] w-[13px] translate-y-px self-center"><path d="M14 4v6H7v4L0 7l7-7v4Z" fill="#8e959e" /></svg>
          <span className="text-[10.800px] font-medium tracking-[-0.2px]">4.54</span><span className="text-[18.500px] font-medium leading-[24px] tracking-[-0.6px]">46</span><span className="text-[10.500px] font-medium">0</span>
        </div>
      </div>
      <div className="relative flex h-[20px] text-[11px]">
        <div className="w-[64px] pl-[20px] leading-[20px] text-[#e31b23]">Sell</div>
        <div className="mt-[3px] h-[16px] w-[75px] rounded-[3px] bg-[#0c1222] text-center text-[11.500px] font-medium leading-[17px]">20.5</div>
        <div className="w-[66px] pl-[24px] font-medium leading-[20px]">Buy</div>
      </div>
    </div>
    <div className="flex flex-1 overflow-hidden">
      <div className="ml-[6px] mt-[13px] flex w-[200px] flex-col">
        <div className={box + " h-[22px]"}><Head>Volume</Head></div>
        <div className={box + " mt-[5.500px] h-[22px]"}><Head>Account info</Head></div>
        <div className={box + " mt-[5.500px] h-[22px]"}><Head>Open Positions</Head></div>
        <div className={box + " mt-[6px] h-[151.500px]"}>
          <Head open>Chart controls</Head>
          <div className="flex flex-col gap-[5px] pl-[3.500px] pt-[4px]">
            <div className="flex gap-[2.300px]">
              <Btn><svg viewBox="0 0 12 12" className="h-[11px] w-[11px]" fill="none"><path d="M3.500 1v9M1.500 9h2M3.500 3h2" stroke="#2fa84f" strokeWidth="1.400" /><path d="M8.500 1v9M6.500 3h2M8.500 8h2.500" stroke="#e03434" strokeWidth="1.400" /></svg></Btn>
              <Btn on><svg viewBox="0 0 12 12" className="h-[11px] w-[11px]" fill="none"><path d="M3.500 1v10" stroke="#2fa84f" /><rect x="2" y="3" width="3" height="5.500" fill="#fff" stroke="#2fa84f" /><path d="M8.500 0v10" stroke="#e03434" /><rect x="7" y="2" width="3" height="5.500" fill="#f6a0a0" stroke="#e03434" /></svg></Btn>
              <Btn><svg viewBox="0 0 12 7" className="h-[6px] w-[11px]" fill="none"><path d="m1 6 5-5 5 5" stroke="#e03434" strokeWidth="1.400" /></svg></Btn>
              <div className="ml-[4.500px] h-[19px] w-[82px] rounded-[2px] border border-[#aab2c6] bg-[#16223f]"><svg viewBox="0 0 80 17" className="h-full w-full"><path d="M4 8.500 77 5.500v6Z" fill="#fff" /><circle cx="34" cy="8.500" r="6" fill="#fff" /></svg></div>
            </div>
            <div className="flex gap-[2.300px]"><Btn>GRD</Btn><Btn on>TRD</Btn><Btn on>MRK</Btn><Btn on>LDR</Btn></div>
            <div className="flex gap-[2.300px]"><Btn>BID</Btn><Btn>ASK</Btn><Btn>PER</Btn><Btn>VOL</Btn><Btn>HST</Btn></div>
            <div className="flex gap-[2.300px]"><Btn>HL0</Btn><Btn>HL1</Btn><Btn>HLS</Btn><Btn>PVT</Btn><Btn>CNT</Btn></div>
            <div className="flex gap-[2.300px]">
              <Btn><Nav d="M0 1h1.500v8H0zM6 1v8L1.500 5zM11 1v8L6.500 5z" /></Btn>
              <Btn><Nav d="M3 1h1.700v8H3zM9 1v8L4.700 5z" /></Btn>
              <Btn><Nav d="M7.300 1H9v8H7.300zM3 1v8l4.300-4z" /></Btn>
              <Btn><Nav d="M10.500 1H12v8h-1.500zM1 1v8l4.500-4zM6 1v8l4.500-4z" /></Btn>
              <Btn>HSC</Btn><Btn>VSC</Btn>
            </div>
          </div>
        </div>
        <div className={box + " mt-[6.500px] h-[31px]"}><Head open>Lot size calculation</Head></div>
        <div className={box + " mt-[6.500px] h-[135px]"}>
          <Head open>Symbol information</Head>
          <div className="flex h-[62px] pt-[3px]">
            <div className="w-[130px] text-center text-[#e3101c]"><div className="text-[16px] leading-[26px]">-0.03%</div><div className="text-[12px] leading-[20px]">-12.6 pips</div></div>
            <div className="flex w-[36px] flex-col justify-between pb-[16px] text-right font-['Liberation_Sans',sans-serif] text-[8.200px] font-bold leading-[9px]"><span>4.55638</span><span>4.53052</span></div>
            <div className="ml-[2px] h-[43px] w-[26px]"><div className="h-[23px] bg-[#c40000]" /><div className="h-[20px] bg-[#00c000]" /></div>
          </div>
          <div className="-mt-[1px] flex pl-[3.500px]"><Gauge label="Trend" up /><Gauge label="Momentum" /><Gauge label="Strength" /></div>
        </div>
        <div className={box + " mt-[6px] h-[60px]"}>
          <Head open>Trading Central</Head>
          <div className="pl-[8px] pt-[6px] text-[10.800px] font-bold leading-[17px] tracking-[-0.080px]">Technical Event Lookup</div>
        </div>
      </div>
      <div className="ml-auto mt-[7px] flex w-[15px] flex-col bg-[#f0f0f0]">
        <div className="flex h-[28px] items-center justify-center pt-[8px]"><svg viewBox="0 0 10 6" className="h-[6px] w-[10px]" fill="none"><path d="m1 5 4-4 4 4" stroke="#444" strokeWidth="1.900" /></svg></div>
        <div className="h-[399px] bg-[#cdcdcd]" />
        <div className="mt-[21px] flex justify-center"><svg viewBox="0 0 10 6" className="h-[6px] w-[10px]" fill="none"><path d="m1 1 4 4 4-4" stroke="#444" strokeWidth="1.900" /></svg></div>
      </div>
    </div>
  </div>
);

/* ---------- order window ---------- */

const tickX = [141, 221, 302, 382, 462, 542, 622];
const tickY = [152, 236, 320, 404, 488, 572, 656, 740, 824];
const tickLabels = ["4.54540", "4.54505", "4.54470", "4.54435", "4.54400", "4.54365", "4.54330", "4.54295", "4.54260"];
const mini = { fontFamily: "Noto Sans, sans-serif", fontSize: 22.5, fill: "#222" };
const TickChart = () => (
  <svg viewBox="49 129 768 831" className="h-[277px] w-[256px] shrink-0 bg-white">
    <path d="M817 131H51V960" fill="none" stroke="#808080" strokeWidth="4" />
    <g stroke="#dadada" strokeWidth="3" strokeDasharray="10 7">
      {tickX.map((x) => <path key={x} d={`M${x} 140V906`} />)}
      {tickY.map((y) => <path key={y} d={`M59 ${y}H700`} />)}
      <path d="M264 140V906" stroke="#c4c4c4" strokeWidth="4" strokeDasharray="6 5" />
    </g>
    <rect x="59" y="139.500" width="642" height="767" fill="none" stroke="#222" strokeWidth="3" />
    <path d="M61 906v7M141 906v7M221 906v7M302 906v7M382 906v7M462 906v7M542 906v7M622 906v7M700 152h6M700 236h6M700 320h6M700 404h6M700 488h6M700 572h6M700 656h6M700 740h6M700 824h6" stroke="#222" strokeWidth="3" />
    <text x="66" y="165" textLength="89" lengthAdjust="spacingAndGlyphs" {...mini}>EURPLN</text>
    {tickY.map((y, i) => <text key={y} x="713" y={y + 8} textLength="84" lengthAdjust="spacingAndGlyphs" {...mini}>{tickLabels[i]}</text>)}
    <rect x="705" y="330" width="101" height="27" fill="#ff5a5a" /><text x="713" y="351" textLength="84" lengthAdjust="spacingAndGlyphs" {...mini} fill="#fff">4.54460</text>
    <rect x="705" y="821" width="101" height="26" fill="#1450ff" /><text x="713" y="842" textLength="84" lengthAdjust="spacingAndGlyphs" {...mini} fill="#fff">4.54255</text>
    <g>
      <text x="60" y="938" textLength="115" lengthAdjust="spacingAndGlyphs" {...mini}>2020.04.23</text>
      {([[221, "19:59"], [301, "20:00"], [381, "20:00"], [461, "20:01"], [541, "20:02"]] as [number, string][]).map(([x, t]) => (
        <text key={x} x={x} y="938" textLength="57" lengthAdjust="spacingAndGlyphs" {...mini}>{t}</text>
      ))}
      <text x="621" y="938" textLength="91" lengthAdjust="spacingAndGlyphs" {...mini}>20:02:47</text>
    </g>
    <polyline fill="none" stroke="#ff4545" strokeWidth="2.600" points="59,210 107,210 110,232 157,232 166,184 181,184 192,232 200,244 207,232 213,228 216,195 220,232 226,195 229,239 240,239 246,246 252,239 258,245 264,240 270,246 274,240 278,262 283,242 287,244 292,258 296,243 300,252 305,241 310,248 314,240 318,240 323,262 326,257 330,277 337,282 347,270 406,270 410,313 475,313 479,330 482,313 542,313 547,327 550,313 556,313 559,343 700,343" />
    <polyline fill="none" stroke="#1f4fff" strokeWidth="2.600" points="59,712 63,702 66,769 70,725 74,738 78,752 82,742 86,762 90,742 94,760 98,740 102,757 106,745 110,758 114,738 118,755 121,735 125,700 128,763 132,712 137,710 140,770 146,782 150,722 154,768 158,712 164,708 168,690 172,693 176,710 180,712 182,765 188,768 194,790 198,797 206,797 209,765 213,770 216,735 226,733 229,805 232,792 240,800 248,799 258,790 264,787 274,795 280,796 286,801 292,796 304,797 316,792 324,791 332,780 340,782 350,793 360,790 364,760 368,776 372,755 376,785 380,775 384,802 388,790 394,812 402,818 406,800 412,818 417,772 421,808 428,820 434,815 440,830 448,824 454,838 460,830 464,845 468,818 472,847 477,838 481,783 485,845 489,825 494,820 499,855 504,855 509,826 514,855 519,830 523,858 527,815 530,845 534,822 538,865 543,863 546,818 550,835 555,790 561,785 566,812 571,800 575,826 580,862 585,780 590,785 595,800 599,802 604,820 609,830 613,793 617,848 622,828 626,833 700,834" />
  </svg>
);

const Lbl = ({ children }: { children: string }) => <div className="w-[68px] shrink-0 whitespace-nowrap text-right">{children}</div>;
const Spinner = () => (
  <div className="ml-px flex h-full w-[12px] shrink-0 flex-col pt-px">
    <div className="flex flex-1 items-center justify-center border border-[#acacac] bg-[#f3f3f3]"><svg viewBox="0 0 6 4" className="h-[3px] w-[4px]"><path d="M0 4h6L3 0Z" fill="#111" /></svg></div>
    <div className="flex flex-1 items-center justify-center border border-t-0 border-[#acacac] bg-[#f3f3f3]"><svg viewBox="0 0 6 4" className="h-[3px] w-[4px]"><path d="M0 0h6L3 4Z" fill="#111" /></svg></div>
  </div>
);
const num = "flex h-full w-[68px] shrink-0 items-center justify-end border border-[#999] bg-white pr-[4px]";
const combo = "flex h-full w-[270px] items-center justify-between border border-[#adadad] bg-[#e1e1e1] pl-[2px] pr-[3px]";

const OrderWindow = () => (
  <div className="absolute left-[263.500px] top-[99px] flex h-[325px] w-[649.500px] flex-col bg-[#f0f0f0] font-['Noto_Sans',sans-serif] text-[9.300px] tracking-[-0.120px] text-[#222] shadow-[0_3px_12px_2px_rgba(0,0,0,0.32)]">
    <div className="flex h-[26px] shrink-0 items-center bg-white pl-[7px] pr-[15px] text-[9.800px] text-[#333]">
      Order
      <DockIcon className="ml-auto -translate-y-px" />
      <div className="ml-[54px] mt-[2px] h-px w-[9px] bg-[#111]" />
      <div className="ml-[29px] h-[9px] w-[9px] border border-[#ccc]" />
      <svg viewBox="0 0 10 10" className="ml-[29px] h-[9px] w-[9px]"><path d="m.8.8 8.400 8.400M9.200.8.8 9.200" stroke="#222" /></svg>
    </div>
    <div className="flex pl-[7px] pt-[8px]">
      <TickChart />
      <div className="ml-[20.500px] flex w-[344px] flex-col">
        <div className="flex h-[18px] items-center gap-[6px]"><Lbl>Symbol:</Lbl>
          <div className="flex h-full w-[270px] items-center justify-between border border-[#5b8be0] bg-white pl-[4px] pr-[3px]"><span className="bg-[#0078d7] leading-[12px] tracking-[-0.420px] text-white">EURPLN, Euro vs Polish Zloty</span><Chev /></div>
        </div>
        <div className="mt-[6px] flex h-[18px] items-center gap-[6px]"><Lbl>Type:</Lbl><div className={combo}><span className="tracking-[-0.2px]">Market Execution</span><Chev /></div></div>
        <div className="mt-[21px] flex h-[17px] items-center"><Lbl>Volume:</Lbl><div className={"ml-[6px] " + num}>0.10</div><Spinner /><span className="ml-[7px] tracking-[-0.220px]">10 000 EUR</span></div>
        <div className="mt-[7px] flex h-[17px] items-center"><Lbl>Stop Loss:</Lbl><div className={"ml-[6px] " + num}>0.00000</div><Spinner /><span className="ml-auto mr-[6px]">Take Profit:</span><div className={num}>0.00000</div><Spinner /></div>
        <div className="mt-[6px] flex h-[18px] items-center gap-[6px]"><Lbl>Fill policy:</Lbl><div className={combo}>Fill or Kill<Chev /></div></div>
        <div className="mt-[5px] flex h-[17px] items-center gap-[6px]"><Lbl>Comment:</Lbl><div className="h-full w-[270px] border border-[#999] bg-white" /></div>
        <div className="mt-[18px] flex h-[30px] items-baseline pl-[82px] text-[22px] leading-[30px] tracking-[-0.280px] text-[#111]">4.5425<span className="text-[17px]">5</span><span className="mx-[8px]">/</span>4.5446<span className="text-[17px]">0</span></div>
        <div className="mt-[22px] flex h-[18px] justify-between">
          <div className="flex w-[161px] items-center justify-center rounded-[1px] border border-[#b06060] bg-gradient-to-b from-[#f09898] to-[#bd5959]">Sell by Market</div>
          <div className="flex w-[162px] items-center justify-center rounded-[1px] border border-[#7088bb] bg-gradient-to-b from-[#a9c3f3] to-[#7590c8]">Buy by Market</div>
        </div>
        <div className="mt-[8px] h-[18px] rounded-[1px] border border-[#adadad]" />
      </div>
    </div>
  </div>
);

/* ---------- page ---------- */

const menu = [["File", "w-[34px]"], ["View", "w-[38px]"], ["Insert", "w-[43px]"], ["Charts", "w-[47px]"], ["Tools", "w-[41px]"], ["Window", "w-[55px]"], ["Help", "w-[40px]"]];

export default function App() {
  return (
    <div className="relative flex h-[868px] w-[1600px] flex-col overflow-hidden bg-[#f0f0f0] font-['Open_Sans','Noto_Sans',sans-serif] text-[10.200px] text-[#222]">
      <div className="flex h-[19px] shrink-0 items-center bg-white pr-[14px]">
        <svg viewBox="0 0 12 13" className="h-[13px] w-[12px]"><circle cx="7.800" cy="4" r="3.500" fill="#2a80e0" /><circle cx="3.600" cy="9" r="3.300" fill="#d31c28" /></svg>
        <span className="ml-[5px] text-[10.200px] tracking-[-0.290px] text-[#8c8c8c]">40030107 - AdmiralMarkets-Demo: Demo Account - Hedge - [EURPLN,Daily]</span>
        <DockIcon className="ml-auto" />
        <div className="ml-[57px] h-px w-[9px] bg-[#999]" />
        <svg viewBox="0 0 10 10" className="ml-[28px] h-[9px] w-[9px]" fill="none"><path d="M.5 2.500h7v7h-7zM2.500 2.500V.5h7v7h-2" stroke="#999" /></svg>
        <svg viewBox="0 0 10 10" className="ml-[29px] h-[9px] w-[9px]"><path d="m.5.5 9 9M9.500.5l-9 9" stroke="#999" /></svg>
      </div>
      <div className="flex h-[18px] shrink-0 items-center border-b border-[#a8a8a8] bg-[#f0f0f0]">
        <svg viewBox="0 0 15 14" className="ml-px mr-[9px] h-[14px] w-[15px]" fill="none"><rect x="1" y="1" width="11" height="9" fill="#fff" stroke="#4a90dd" /><path d="M1 1h11v2H1z" fill="#3c86dd" /><rect x="4" y="4" width="10" height="9" fill="#fff" stroke="#4a90dd" /><path d="M4 4h10v2H4z" fill="#6aa8ea" /><path d="m5.500 11 2-2 2 1 3-2.500" stroke="#e8542a" strokeWidth="1.300" /></svg>
        {menu.map(([m, w]) => <div key={m} className={"shrink-0 tracking-[-0.1px] " + w}>{m}</div>)}
        <div className="ml-auto flex h-full items-center gap-[2px] text-[#7c8fb5]">
          <div className="flex h-[15px] w-[14px] items-center justify-center bg-[#e0e5ec]"><div className="mt-[5px] h-[2px] w-[5px] bg-[#7c8fb5]" /></div>
          <div className="flex h-[15px] w-[14px] items-center justify-center bg-[#e0e5ec]"><svg viewBox="0 0 8 8" className="h-[7px] w-[7px]" fill="none"><path d="M.5 3.500h5v4h-5zM2.500 3V1h5v4H6M2.500 1.500h5" stroke="#7c8fb5" strokeWidth="1.200" /></svg></div>
          <div className="flex h-[15px] w-[12px] items-center justify-center bg-[#e0e5ec]"><svg viewBox="0 0 8 8" className="h-[6px] w-[6px]"><path d="m1 1 6 6M7 1 1 7" stroke="#6a80ad" strokeWidth="1.800" /></svg></div>
        </div>
      </div>
      <Toolbar />
      <div className="flex min-h-0 flex-1">
        <MarketWatch />
        <div className="flex flex-1 flex-col border-l border-white pt-[2px]">
          <div className="flex h-[768px] shrink-0 border-l-2 border-[#777] bg-white">
            <div className="flex w-[1328px] shrink-0 flex-col border-l border-t border-[#333]">
              <div className="flex h-[603px] shrink-0 overflow-hidden pl-px">
                <PriceChart />
                <div className="mt-px w-[23px] bg-[repeating-linear-gradient(#838383_0_3.400px,#5e5e5e_3.400px_4.450px)]" />
                <div className="ml-[2px] mt-px w-[23px] bg-[repeating-linear-gradient(#ff8080_0_3.400px,#f86464_3.400px_4.450px)]" />
                <div className="ml-auto h-full"><Panel /></div>
              </div>
              <div className="h-[4px] shrink-0 border-y border-[#333]" />
              <div className="ml-px flex flex-col"><MacdChart /><div className="h-px bg-[#999]" /><DateAxis /></div>
            </div>
            <div className="-ml-px border-l border-[#777]"><PriceAxis /></div>
          </div>
          <div className="flex h-[17px] shrink-0 items-center border-t border-[#555] text-[10px] tracking-[-0.220px] text-[#777]">
            <div className="w-[95px] pl-[12px]">#USDX_M0,M30</div>
            <div className="-mt-px flex h-full w-[79px] items-center justify-center border-x border-b border-[#111] bg-white text-[#111]">EURPLN,Daily</div>
            <div className="w-[91px] text-center">#USDX_M0,Daily</div>
            <div className="h-[11px] w-px bg-[#888]" />
            <div className="w-[70px] text-center">GOLD,Daily</div>
            <div className="h-[11px] w-px bg-[#888]" />
            <div className="w-[57px] text-center">Connect</div>
            <div className="ml-auto mr-[8px] flex gap-[14px]">
              <svg viewBox="0 0 4 6" className="h-[5px] w-[3px]"><path d="M4 0v6L0 3Z" fill="#666" /></svg>
              <svg viewBox="0 0 4 6" className="h-[5px] w-[3px]"><path d="M0 0v6l4-3Z" fill="#666" /></svg>
            </div>
          </div>
        </div>
      </div>
      <div className="flex h-[18px] shrink-0 items-center border-t border-[#dadada] bg-[#f0f0f0] pt-px">
        <div className="w-[1023px] tracking-[-0.150px]">For Help, press F1</div>
        <div className="h-[15px] w-[107px] border-l border-[#c0c0c0] pl-[5px] leading-[15px] tracking-[-0.2px]">Trader&apos;s Talk</div>
        <div className="h-[15px] w-[82px] border-l border-[#c0c0c0]" />
        <div className="h-[15px] w-[59px] border-l border-[#c0c0c0]" />
        <div className="h-[15px] w-[59px] border-l border-[#c0c0c0]" />
        <div className="h-[15px] w-[58px] border-l border-[#c0c0c0]" />
        <div className="h-[15px] w-[59px] border-l border-[#c0c0c0]" />
        <div className="h-[15px] w-[59px] border-l border-[#c0c0c0]" />
        <svg viewBox="0 0 12 9" className="h-[9px] w-[12px]"><path d="M0 6h2.500v3H0zM3 4h2.500v5H3zM6 2h2.500v7H6zM9 0h2.500v9H9z" fill="#39a935" /></svg>
        <div className="ml-[4px] whitespace-nowrap tracking-[-0.2px]">8.49 ms</div>
      </div>
      <OrderWindow />
    </div>
  );
}
